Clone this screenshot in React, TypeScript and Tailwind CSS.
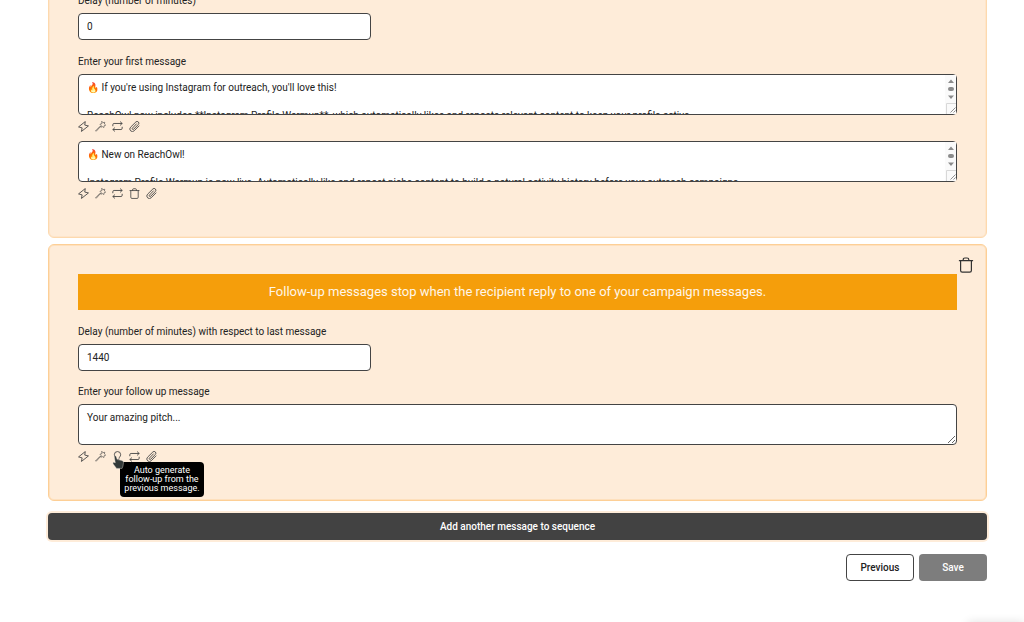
import { useState } from 'react';

function BoltIcon() {
  return (
    <svg viewBox="0 0 16 16" className="size-[11px]" fill="none" stroke="currentColor" strokeWidth="1.3" strokeLinejoin="round">
      <path d="M10.600.8.8 8.600l5.200 1.400-1 5.200L15.200 7.200 9.800 5.900z" />
    </svg>
  );
}

function WandIcon() {
  return (
    <svg viewBox="0 0 16 16" className="size-[11px]" fill="none" stroke="currentColor" strokeWidth=".9" strokeLinejoin="round" strokeLinecap="round">
      <path d="M10.200.8l1.500 1.700 2.500-.7-.5 2.500 1.800 1.700-2.300 1-.2 2.500-2.100-1.300-2.400.8.400-2.500-1.700-1.700 2.400-.9z" />
      <path d="M7.700 8.400 1.700 15 .9 14.300 7.100 7.900z" />
    </svg>
  );
}

function RepeatIcon() {
  return (
    <svg viewBox="0 0 16 16" className="size-[11px]" fill="none" stroke="currentColor" strokeWidth="1.3" strokeLinejoin="round" strokeLinecap="round">
      <path d="M1.200 7V5.400q0-1.800 1.800-1.800h11.600M12.200 1.200l2.500 2.400-2.500 2.400" />
      <path d="M14.800 9v1.600q0 1.800-1.800 1.800H1.400M3.800 10l-2.500 2.400 2.500 2.400" />
    </svg>
  );
}

function ClipIcon() {
  return (
    <svg viewBox="0 0 16 16" className="size-[11px]" fill="none" stroke="currentColor" strokeWidth="1.3" strokeLinejoin="round" strokeLinecap="round">
      <path d="M10.800 4.200 5 10.300a1.200 1.200 0 0 0 1.800 1.700l6.800-7a2.500 2.500 0 0 0-3.600-3.600L2.300 9a3.700 3.700 0 0 0 5.300 5.200l6.900-7" />
    </svg>
  );
}

function TrashIcon({ className }: { className: string }) {
  return (
    <svg viewBox="0 0 16 16" className={className} fill="none" stroke="currentColor" strokeWidth="1.2" strokeLinejoin="round" strokeLinecap="round">
      <path d="M1.400 3.700h13.200M5.200 3.600V2.700Q5.200 1 6.900 1h2.200q1.700 0 1.700 1.700v.9" />
      <path d="M2.600 3.800v9.700q0 1.700 1.700 1.700h7.400q1.700 0 1.700-1.700V3.800" />
    </svg>
  );
}

function BulbIcon() {
  return (
    <svg viewBox="0 0 16 16" className="size-[11px]" fill="none" stroke="currentColor" strokeWidth="1.3" strokeLinecap="round">
      <path d="M5.800 10.600C5.800 9 3.400 8 3.400 5.400a4.600 4.600 0 0 1 9.200 0c0 2.600-2.400 3.600-2.400 5.200M5.800 12.600h4.400M6.600 14.800h2.800" />
    </svg>
  );
}

function ScrollThumb() {
  return (
    <svg aria-hidden="true" viewBox="0 0 11 39" className="pointer-events-none absolute top-px right-px h-[39px] w-[11px]">
      <rect width="11" height="39" fill="#fafafa" />
      <path d="M3 8h6L6 4.500zM3 20.500h6L6 24z" fill="#8b8b8b" />
      <rect x="3" y="12" width="6" height="4" rx="2" fill="#8b8b8b" />
      <path d="M1.500 39V28.500H11" fill="none" stroke="#d8d8d8" />
      <path d="M5.500 37.500l5-5M8.500 37.500l2-2" fill="none" stroke="#777" strokeWidth=".8" />
    </svg>
  );
}

function PointerCursor() {
  return (
    <svg aria-hidden="true" viewBox="0 0 12 14" className="pointer-events-none absolute top-1 left-0 z-20 h-[14px] w-3">
      <path d="M2.200 1Q3.600.2 4.200 1.700L5.200 4.600l4.600.8q1.800.4 1.700 2.100l-.5 3.500-.9 2.400H4.600L1.200 9Q.3 7.600 1.600 7.200l1.700.6z" fill="#333938" stroke="#e8e4dc" strokeWidth=".4" />
    </svg>
  );
}

function Tools({ withTrash = false, withBulb = false }: { withTrash?: boolean; withBulb?: boolean }) {
  return (
    <div className="mt-[5px] flex h-3 items-center gap-1.5 text-[#444]">
      <button type="button" aria-label="Variables"><BoltIcon /></button>
      <button type="button" aria-label="Rewrite"><WandIcon /></button>
      {withBulb && (
        <div className="relative">
          <button type="button" aria-label="Generate follow-up" className="block"><BulbIcon /></button>
          <PointerCursor />
          <div role="tooltip" className="absolute top-[11px] left-2 z-10 w-[84px] rounded bg-black py-1 text-center text-[9px] leading-[9px] whitespace-pre text-white">
            {'Auto generate\nfollow-up from the\nprevious message.'}
          </div>
        </div>
      )}
      <button type="button" aria-label="Add variation"><RepeatIcon /></button>
      {withTrash && <button type="button" aria-label="Delete variation"><TrashIcon className="size-[11px]" /></button>}
      <button type="button" aria-label="Attach file"><ClipIcon /></button>
    </div>
  );
}

function Message({ id, label, value, onChange, scroll = false }: { id: string; label?: string; value: string; onChange: (v: string) => void; scroll?: boolean }) {
  return (
    <div className="relative">
      <textarea
        id={id}
        aria-label={label}
        value={value}
        onChange={(e) => onChange(e.target.value)}
        className={`block h-[41px] w-full overflow-hidden rounded border border-[#444] bg-white px-2 py-1.5 leading-[14px] ${scroll ? 'resize-none' : 'resize-y'}`}
      />
      {scroll && <ScrollThumb />}
    </div>
  );
}

export default function App() {
  const [delay, setDelay] = useState('0');
  const [followDelay, setFollowDelay] = useState('1440');
  const [first, setFirst] = useState("🔥 If you're using Instagram for outreach, you'll love this!\n\nReachOwl now includes **Instagram Profile Warmup**, which automatically likes and reposts relevant content to keep your profile active.");
  const [second, setSecond] = useState('🔥 New on ReachOwl!\n\nInstagram Profile Warmup is now live. Automatically like and repost niche content to build a natural activity history before your outreach campaigns.');
  const [followUp, setFollowUp] = useState('Your amazing pitch...');

  return (
    <main className="overflow-hidden bg-white pr-[37px] pb-10 pl-12 font-[Roboto,sans-serif] text-[10px] leading-[14px] text-[#222]">
      <section className="-mt-9 rounded-md border border-[#fdd9ae] bg-[#feecd9] px-[29px] pt-[29px] pb-[38px] ring-1 ring-[#fee5ca] ring-inset">
        <label htmlFor="delay" className="block">Delay (number of minutes)</label>
        <input id="delay" value={delay} onChange={(e) => setDelay(e.target.value)} className="mt-[5px] block h-[27px] w-1/3 rounded border border-[#444] bg-white px-2" />
        <label htmlFor="first" className="mt-[15px] mb-[5px] block">Enter your first message</label>
        <Message id="first" value={first} onChange={setFirst} scroll />
        <Tools />
        <div className="mt-[9px]">
          <Message id="second" label="Message variation" value={second} onChange={setSecond} scroll />
        </div>
        <Tools withTrash />
      </section>

      <section className="relative mt-1.5 rounded-md border border-[#fdcf96] bg-[#feecd9] px-[29px] pt-[29px] pb-[38px] ring-1 ring-[#fee0bd] ring-inset">
        <button type="button" aria-label="Delete message" className="absolute top-3 right-3 text-[#333]">
          <TrashIcon className="size-4" />
        </button>
        <p className="bg-[#f59e0b] px-4 py-2 text-center text-[13px] leading-5 text-[#fff6e8]">
          Follow-up messages stop when the recipient reply to one of your campaign messages.
        </p>
        <label htmlFor="follow-delay" className="mt-[15px] mb-[5px] block">Delay (number of minutes) with respect to last message</label>
        <input id="follow-delay" value={followDelay} onChange={(e) => setFollowDelay(e.target.value)} className="block h-[27px] w-1/3 rounded border border-[#444] bg-white px-2" />
        <label htmlFor="follow-up" className="mt-[14px] mb-[5px] block">Enter your follow up message</label>
        <Message id="follow-up" value={followUp} onChange={setFollowUp} />
        <Tools withBulb />
      </section>

      <button type="button" className="mt-3 block h-[27px] w-full rounded bg-[#424242] font-medium text-white ring-2 ring-[#feecd9]">
        Add another message to sequence
      </button>
      <div className="mt-[14px] flex justify-end gap-[5px]">
        <button type="button" className="h-[27px] w-[68px] rounded border border-[#444] bg-white font-medium">Previous</button>
        <button type="button" className="h-[27px] w-[68px] rounded bg-[#7d7d7d] font-medium text-white">Save</button>
      </div>
      <div className="fixed top-full right-0 h-8 w-14 shadow-[0_0_10px_rgba(0,0,0,0.12)]" />
    </main>
  );
}
